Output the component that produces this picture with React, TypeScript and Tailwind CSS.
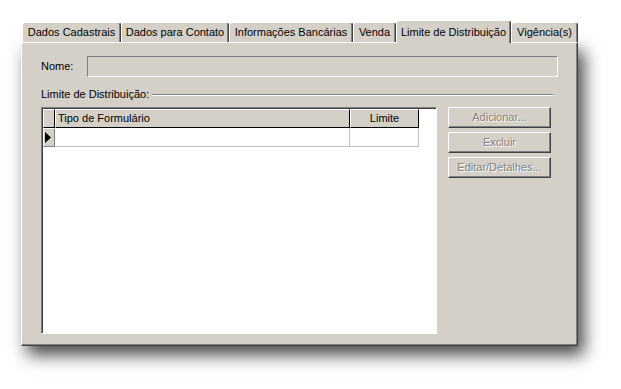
const tabs = [
  { label: 'Dados Cadastrais', w: 'w-[99px]' },
  { label: 'Dados para Contato', w: 'w-[108px]' },
  { label: 'Informações Bancárias', w: 'w-[124px]' },
  { label: 'Venda', w: 'w-[43px]' },
  { label: 'Limite de Distribuição', w: 'w-[115px]' },
  { label: 'Vigência(s)', w: 'w-[67px]' },
];

const font = "font-['Tahoma','Liberation_Sans',Arial,sans-serif]";

function Tab({ label, w, active }: { label: string; w: string; active?: boolean }) {
  if (active) {
    return (
      <div
        className={`${w} h-[23px] -mb-[1px] relative z-10 flex items-start justify-center pt-[3px] bg-[#d4d0c8] border-t border-l border-white border-r border-r-[#404040] rounded-t-[3px] shadow-[inset_-1px_0_0_#808080]`}
      >
        {label}
      </div>
    );
  }
  return (
    <div
      className={`${w} h-[20px] flex items-center justify-center bg-[#d4d0c8] border-t border-l border-white border-r border-r-[#404040] rounded-t-[3px] shadow-[inset_-1px_0_0_#808080]`}
    >
      {label}
    </div>
  );
}

function DisabledButton({ label }: { label: string }) {
  return (
    <div className="h-[21px] w-[103px] flex items-center justify-center bg-[#d4d0c8] border-t border-l border-white border-r border-b border-r-[#404040] border-b-[#404040] shadow-[inset_-1px_-1px_0_#808080] text-[#808080] [text-shadow:1px_1px_0_#ffffff]">
      {label}
    </div>
  );
}

export default function App() {
  return (
    <div className={`w-[621px] h-[389px] bg-white pl-[21px] pt-[20px] text-[11px] text-black ${font}`}>
      <div className="flex items-end h-[22px] pl-[1px] relative">
        {tabs.map((t, i) => (
          <Tab key={t.label} label={t.label} w={t.w} active={i === 4} />
        ))}
      </div>

      <div className="w-[557px] h-[304px] bg-[#d4d0c8] border-t border-l border-white border-r border-b border-r-[#404040] border-b-[#404040] shadow-[inset_-1px_-1px_0_#808080,6px_9px_16px_rgba(0,0,0,0.72)] flex flex-col pl-[19px] pr-[19px] pt-[13px]">
        {/* Nome */}
        <div className="flex items-center h-[21px]">
          <span className="w-[46px]">Nome:</span>
          <div className="flex-1 h-[21px] border-t border-l border-[#808080] border-r border-b border-r-white border-b-white" />
        </div>

        {/* group label */}
        <div className="flex items-center mt-[11px] h-[13px]">
          <span>Limite de Distribuição:</span>
          <div className="flex-1 ml-[3px] mr-[5px] border-t border-[#808080] border-b border-b-white" />
        </div>

        <div className="flex mt-[6px]">
          {/* grid */}
          <div className="w-[396px] h-[227px] bg-white border-t border-l border-[#808080] border-r border-b border-r-white border-b-white shadow-[inset_1px_1px_0_#404040]">
            <div className="flex h-[19px] pl-[1px] pt-[1px] box-content">
              <div className="w-[12px] h-[19px] bg-[#d4d0c8] border-t border-l border-white border-r border-b border-r-black border-b-black" />
              <div className="w-[295px] h-[19px] bg-[#d4d0c8] border-t border-l border-white border-r border-b border-r-black border-b-black pl-[2px] flex items-center">
                Tipo de Formulário
              </div>
              <div className="w-[69px] h-[19px] bg-[#d4d0c8] border-t border-l border-white border-r border-b border-r-black border-b-black flex items-center justify-center">
                Limite
              </div>
            </div>
            <div className="flex h-[19px] pl-[1px]">
              <div className="w-[12px] h-[19px] bg-[#d4d0c8] border-t border-l border-white border-r border-b border-r-[#808080] border-b-[#808080] flex items-center">
                <svg width="6" height="11" viewBox="0 0 6 11" className="ml-[1px]">
                  <path d="M0 0 L6 5.5 L0 11 Z" fill="black" />
                </svg>
              </div>
              <div className="w-[295px] h-[19px] border-r border-b border-[#c0c0c0]" />
              <div className="w-[69px] h-[19px] border-r border-b border-[#c0c0c0]" />
            </div>
          </div>

          {/* buttons */}
          <div className="ml-[11px] flex flex-col gap-[4px]">
            <DisabledButton label="Adicionar..." />
            <DisabledButton label="Excluir" />
            <DisabledButton label="Editar/Detalhes..." />
          </div>
        </div>
      </div>
    </div>
  );
}
